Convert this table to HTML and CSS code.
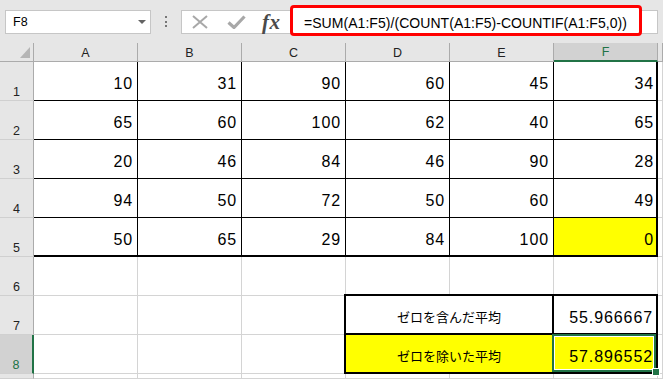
FILE: index.html
```html
<!DOCTYPE html>
<html lang="ja">
<head>
<meta charset="utf-8">
<title>Excel</title>
<link rel="stylesheet" href="styles.css">
</head>
<body>
<div class="topbar">
  <div class="namebox"><span>F8</span><span class="caret"></span></div>
  <div class="grip"><i></i><i></i><i></i></div>
  <div class="fbar">
    <svg class="ico-x" width="18" height="14" viewBox="0 0 18 14"><path d="M2 1 L16 13 M16 1 L2 13" stroke="#a8a8a8" stroke-width="2" fill="none"/></svg>
    <svg class="ico-check" width="19" height="14" viewBox="0 0 19 14"><path d="M1.5 7.5 L7 12.5 L17.5 1.5" stroke="#a8a8a8" stroke-width="3.2" fill="none"/></svg>
    <span class="fx">fx</span>
    <div class="formula">=SUM(A1:F5)/(COUNT(A1:F5)-COUNTIF(A1:F5,0))</div>
  </div>
</div>
<div class="sheet">
  <div class="corner"><span class="tri"></span></div>
  <div class="ch">A</div><div class="ch">B</div><div class="ch">C</div><div class="ch">D</div><div class="ch">E</div><div class="ch sel">F</div><div class="ch"></div>

  <div class="rh">1</div><div class="c n">10</div><div class="c n">31</div><div class="c n">90</div><div class="c n">60</div><div class="c n">45</div><div class="c n lastc">34</div><div class="g"></div>
  <div class="rh">2</div><div class="c n">65</div><div class="c n">60</div><div class="c n">100</div><div class="c n">62</div><div class="c n">40</div><div class="c n lastc">65</div><div class="g"></div>
  <div class="rh">3</div><div class="c n">20</div><div class="c n">46</div><div class="c n">84</div><div class="c n">46</div><div class="c n">90</div><div class="c n lastc">28</div><div class="g"></div>
  <div class="rh">4</div><div class="c n">94</div><div class="c n">50</div><div class="c n">72</div><div class="c n">50</div><div class="c n">60</div><div class="c n lastc">49</div><div class="g"></div>
  <div class="rh">5</div><div class="c n b5">50</div><div class="c n b5">65</div><div class="c n b5">29</div><div class="c n b5">84</div><div class="c n b5">100</div><div class="c n b5 lastc yellow">0</div><div class="g"></div>

  <div class="rh">6</div><div class="g"></div><div class="g"></div><div class="g"></div><div class="g"></div><div class="g"></div><div class="g"></div><div class="g"></div>
  <div class="rh">7</div><div class="g"></div><div class="g"></div><div class="g"></div><div class="t lbl r7">ゼロを含んだ平均</div><div class="t n val r7">55.966667</div><div class="g"></div>
  <div class="rh sel">8</div><div class="g"></div><div class="g"></div><div class="g"></div><div class="t lbl r8 yellow">ゼロを除いた平均</div><div class="t n val r8 yellow active">57.896552</div><div class="g"></div>
  <div class="rh"></div><div class="g"></div><div class="g"></div><div class="g"></div><div class="g"></div><div class="g"></div><div class="g"></div><div class="g"></div>
</div>
</body>
</html>
```

FILE: styles.css
```css
* { box-sizing: border-box; margin: 0; padding: 0; }
html, body { width: 663px; height: 379px; overflow: hidden; background: #fff; }
body { font-family: "Liberation Sans", Arial, sans-serif; color: #000; }

.topbar {
  height: 43px;
  background: #e6e6e6;
  display: flex;
  align-items: flex-start;
  padding: 10px 0 0 5px;
}
.namebox {
  width: 146px;
  height: 24px;
  background: #fff;
  border: 1px solid #c6c6c6;
  display: flex;
  align-items: center;
  justify-content: space-between;
  padding: 0 4px 0 7px;
  font-size: 12.5px;
}
.caret {
  width: 0; height: 0;
  border-left: 4px solid transparent;
  border-right: 4px solid transparent;
  border-top: 4px solid #636363;
}
.grip {
  margin-left: 14px;
  width: 2px;
  display: flex;
  flex-direction: column;
  gap: 2.5px;
  padding-top: 6px;
}
.grip i { display: block; width: 2px; height: 2px; background: #777; }
.fbar {
  margin-left: 14px;
  width: 477px;
  height: 24px;
  background: #fff;
  border: 1px solid #c6c6c6;
  display: flex;
  align-items: center;
  padding-left: 9px;
}
.ico-x { margin-right: 18px; flex: none; }
.ico-check { margin-right: 16px; flex: none; }
.fx {
  font-family: "Liberation Serif", "Times New Roman", serif;
  font-style: italic;
  font-weight: bold;
  font-size: 21px;
  letter-spacing: 0.5px;
  color: #4a4a4a;
  width: 19px;
  margin-right: 9px;
  line-height: 20px;
}
.formula {
  align-self: flex-start;
  margin-top: -6px;
  width: 352px;
  height: 31px;
  border: 3px solid #ff0000;
  border-radius: 4px;
  background: #fff;
  padding: 4px 0 0 11px;
  font-size: 14px;
  line-height: 22px;
  letter-spacing: 0.05px;
  white-space: nowrap;
}

.sheet {
  display: grid;
  grid-template-columns: 34px repeat(6, 104px) 1fr;
  grid-template-rows: 19px repeat(8, 39px) 1fr;
  height: 336px;
}
.corner {
  background: #e6e6e6;
  border-right: 1px solid #ababab;
  border-bottom: 1px solid #ababab;
  display: flex;
  justify-content: flex-end;
  align-items: flex-end;
  padding: 0 3px 3px 0;
}
.tri {
  width: 10px; height: 11px;
  background: #b5b5b5;
  clip-path: polygon(100% 0, 100% 100%, 0 100%);
}
.ch {
  background: #e6e6e6;
  border-right: 1px solid #ababab;
  border-bottom: 1px solid #ababab;
  display: flex;
  justify-content: center;
  align-items: center;
  padding-top: 1px;
  font-size: 12.5px;
  color: #222;
}
.ch.sel {
  background: #d2d2d2;
  color: #217346;
  border-bottom: 2px solid #217346;
}
.rh {
  background: #e6e6e6;
  border-right: 1px solid #ababab;
  border-bottom: 1px solid #d0d0d0;
  display: flex;
  justify-content: center;
  align-items: flex-end;
  padding-bottom: 1px;
  font-size: 12.5px;
  line-height: 13px;
  color: #222;
}
.rh.sel {
  background: #d2d2d2;
  color: #217346;
  border-right: 2px solid #217346;
}
.c {
  border-right: 1px solid #000;
  border-bottom: 1px solid #000;
  background: #fff;
}
.g {
  border-right: 1px solid #d4d4d4;
  border-bottom: 1px solid #d4d4d4;
}
.n {
  display: flex;
  justify-content: flex-end;
  align-items: center;
  padding: 6px 4px 0 0;
  font-size: 16px;
  line-height: 16px;
  letter-spacing: 0.9px;
}
.lastc { border-right-width: 2px; padding-right: 2px; }
.b5 { border-bottom-width: 2px; }
.yellow { background: #ffff00; }

.t { background: #fff; border: 2px solid #000; }
.t.yellow { background: #ffff00; }
.lbl {
  grid-column: span 2;
  margin-left: -2px;
  display: flex;
  justify-content: center;
  align-items: center;
  padding-top: 4px;
  font-family: "Noto Sans CJK JP", "Liberation Sans", sans-serif;
  font-size: 13px;
}
.val { border-left: 0; padding-right: 3px; }
.r7 { margin-top: -2px; }
.r8 { border-top: 0; }
.active { position: relative; }
.active::after {
  content: "";
  position: absolute;
  top: -1px; left: -2px; right: 0; bottom: 0;
  border: 2px solid #217346;
  box-shadow: inset 0 0 0 1px #fff;
}
.active::before {
  content: "";
  position: absolute;
  right: -3px; bottom: -3px;
  width: 6px; height: 6px;
  background: #217346;
  outline: 1px solid #fff;
  z-index: 1;
}
```
